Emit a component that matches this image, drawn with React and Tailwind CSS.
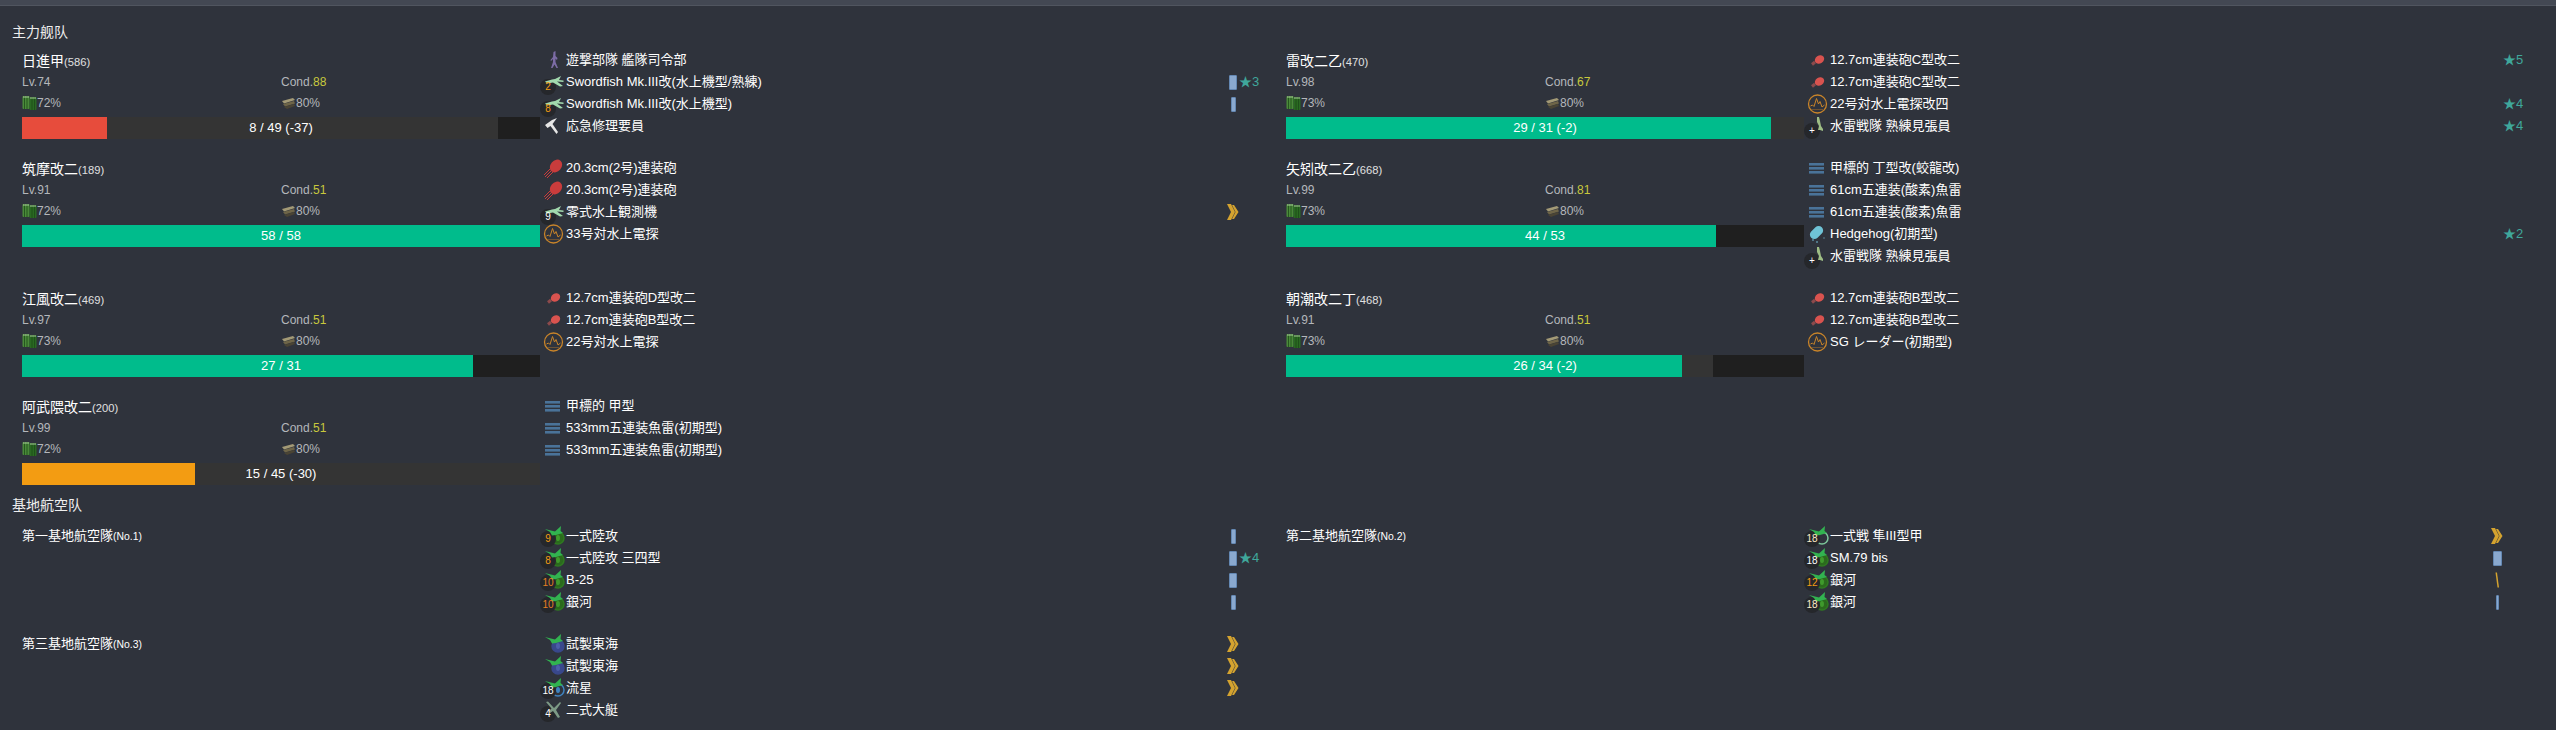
import React from 'react';

const ships = [
  [
    { name: '日進甲', id: 586, lv: 74, cond: 88, fuel: 72, ammo: 80, hp: 8, max: 49, loss: 37, color: 'bg-[#e74c3c]', equips: [
      { icon: 'person', name: '遊撃部隊 艦隊司令部' },
      { icon: 'seaplane', name: 'Swordfish Mk.III改(水上機型/熟練)', num: '2', numColor: 'text-[#f39c12]', alias: 'bar2', star: 3 },
      { icon: 'seaplane', name: 'Swordfish Mk.III改(水上機型)', num: '8', numColor: 'text-[#f39c12]', alias: 'bar1' },
      { icon: 'repair', name: '応急修理要員' },
    ] },
    { name: '雷改二乙', id: 470, lv: 98, cond: 67, fuel: 73, ammo: 80, hp: 29, max: 31, loss: 2, color: 'bg-[#00bc8c]', equips: [
      { icon: 'gunS', name: '12.7cm連装砲C型改二', star: 5 },
      { icon: 'gunS', name: '12.7cm連装砲C型改二' },
      { icon: 'radar', name: '22号対水上電探改四', star: 4 },
      { icon: 'lookout', name: '水雷戦隊 熟練見張員', num: '+', numColor: 'text-white', star: 4 },
    ] },
  ],
  [
    { name: '筑摩改二', id: 189, lv: 91, cond: 51, fuel: 72, ammo: 80, hp: 58, max: 58, loss: 0, color: 'bg-[#00bc8c]', equips: [
      { icon: 'gunL', name: '20.3cm(2号)連装砲' },
      { icon: 'gunL', name: '20.3cm(2号)連装砲' },
      { icon: 'seaplane', name: '零式水上観測機', num: '9', numColor: 'text-white', alias: 'chevron' },
      { icon: 'radar', name: '33号対水上電探' },
    ] },
    { name: '矢矧改二乙', id: 668, lv: 99, cond: 81, fuel: 73, ammo: 80, hp: 44, max: 53, loss: 0, color: 'bg-[#00bc8c]', equips: [
      { icon: 'torpedo', name: '甲標的 丁型改(蛟龍改)' },
      { icon: 'torpedo', name: '61cm五連装(酸素)魚雷' },
      { icon: 'torpedo', name: '61cm五連装(酸素)魚雷' },
      { icon: 'hedgehog', name: 'Hedgehog(初期型)', star: 2 },
      { icon: 'lookout', name: '水雷戦隊 熟練見張員', num: '+', numColor: 'text-white' },
    ] },
  ],
  [
    { name: '江風改二', id: 469, lv: 97, cond: 51, fuel: 73, ammo: 80, hp: 27, max: 31, loss: 0, color: 'bg-[#00bc8c]', equips: [
      { icon: 'gunS', name: '12.7cm連装砲D型改二' },
      { icon: 'gunS', name: '12.7cm連装砲B型改二' },
      { icon: 'radar', name: '22号対水上電探' },
    ] },
    { name: '朝潮改二丁', id: 468, lv: 91, cond: 51, fuel: 73, ammo: 80, hp: 26, max: 34, loss: 2, color: 'bg-[#00bc8c]', equips: [
      { icon: 'gunS', name: '12.7cm連装砲B型改二' },
      { icon: 'gunS', name: '12.7cm連装砲B型改二' },
      { icon: 'radar', name: 'SG レーダー(初期型)' },
    ] },
  ],
  [
    { name: '阿武隈改二', id: 200, lv: 99, cond: 51, fuel: 72, ammo: 80, hp: 15, max: 45, loss: 30, color: 'bg-[#f39c12]', equips: [
      { icon: 'torpedo', name: '甲標的 甲型' },
      { icon: 'torpedo', name: '533mm五連装魚雷(初期型)' },
      { icon: 'torpedo', name: '533mm五連装魚雷(初期型)' },
    ] },
  ],
];

const orange = 'text-[#f39c12]';
const cream = 'text-[#fdebc8]';

const bases = [
  [
    { name: '第一基地航空隊', no: 1, equips: [
      { icon: 'landGreen', name: '一式陸攻', num: '9', numColor: orange, alias: 'bar1' },
      { icon: 'landGreen', name: '一式陸攻 三四型', num: '8', numColor: orange, alias: 'bar2', star: 4 },
      { icon: 'landGreen', name: 'B-25', num: '10', numColor: 'text-[#e67e22]', alias: 'bar2' },
      { icon: 'landGreen', name: '銀河', num: '10', numColor: 'text-[#e67e22]', alias: 'bar1' },
    ] },
    { name: '第二基地航空隊', no: 2, equips: [
      { icon: 'landFighter', name: '一式戦 隼III型甲', num: '18', numColor: cream, alias: 'chevron' },
      { icon: 'landGreen', name: 'SM.79 bis', num: '18', numColor: 'text-white', alias: 'bar3' },
      { icon: 'landGreen', name: '銀河', num: '12', numColor: orange, alias: 'slash' },
      { icon: 'landGreen', name: '銀河', num: '18', numColor: cream, alias: 'thin' },
    ] },
  ],
  [
    { name: '第三基地航空隊', no: 3, equips: [
      { icon: 'landNavy', name: '試製東海', alias: 'chevron' },
      { icon: 'landNavy', name: '試製東海', alias: 'chevron' },
      { icon: 'landBlue', name: '流星', num: '18', numColor: 'text-white', alias: 'chevron' },
      { icon: 'flyingBoat', name: '二式大艇', num: '4', numColor: 'text-white' },
    ] },
  ],
];

const landCircles = {
  landGreen: { circle: '#2b6a1d', inner: '#3f9a2c', outline: '#2f7a20' },
  landFighter: { circle: '#2f333c', inner: '#2f333c', outline: '#7cc59a' },
  landNavy: { circle: '#39488c', inner: '#4c5ea8', outline: '#39488c' },
  landBlue: { circle: '#2f333c', inner: '#3f83c0', outline: '#3f83c0' },
};

function EquipIcon({ type }) {
  let art = null;
  if (landCircles[type]) {
    const c = landCircles[type];
    art = (
      <>
        <circle cx="18" cy="13" r="6" fill={c.circle} stroke={c.outline} strokeWidth="1.5" />
        <ellipse cx="18" cy="13" rx="2" ry="3" fill={c.inner} />
      </>
    );
  }
  if (type === 'person') {
    art = <path d="M13.5 3 L15.5 2 L15.5 7 L17.5 9 L17 11 L15.5 9.5 L15.5 13 L18 19 L16.5 19 L14.5 15.5 L12.5 19 L11 19 L13 13 L13 10 L11 12 L10.5 11 L13 8 Z" fill="#7c6ca5" />;
  }
  if (type === 'repair') {
    art = <path d="M5 10 L12 5 L17 3 L12.5 9 L18 17 L16.5 19 L10.5 11 L7.5 13 Z" fill="#e6e6e6" />;
  }
  if (type === 'gunL') {
    art = (
      <>
        <ellipse cx="16" cy="9" rx="5.5" ry="7" transform="rotate(40 16 9)" fill="#c93c3c" />
        <path d="M12 13 L5 20 M13.5 14.5 L7 21 M10.5 11.5 L4 18" stroke="#c93c3c" strokeWidth="1" />
      </>
    );
  }
  if (type === 'gunS') {
    art = (
      <>
        <ellipse cx="15.5" cy="10.5" rx="5" ry="4" transform="rotate(-35 15.5 10.5)" fill="#d9534f" />
        <path d="M11 13 L8 15.5" stroke="#8c4a4c" strokeWidth="3" />
      </>
    );
  }
  if (type === 'radar') {
    art = (
      <>
        <circle cx="13.5" cy="11" r="9" fill="none" stroke="#c98429" strokeWidth="1.3" />
        <path d="M6.5 13 L8.5 12 L10 13.5 L12.5 5.5 L14.5 11 L16 8.5 L18 14 L20.5 12" fill="none" stroke="#c98429" strokeWidth="1" />
        <path d="M7.5 16.5 L19.5 16.5" stroke="#c98429" strokeWidth="0.8" strokeDasharray="1 1" />
      </>
    );
  }
  if (type === 'torpedo') {
    art = (
      <>
        <rect x="5" y="6" width="15" height="2.6" fill="#4a7399" />
        <rect x="5" y="10" width="15" height="2.6" fill="#4a7399" />
        <rect x="5" y="14" width="15" height="2.6" fill="#4a7399" />
      </>
    );
  }
  if (type === 'hedgehog') {
    art = (
      <>
        <rect x="5" y="5" width="15" height="9" rx="4.5" transform="rotate(-45 12.5 9.5)" fill="#6fc3d6" />
        <circle cx="9" cy="17" r="1" fill="#5b8ea0" />
        <circle cx="13" cy="19" r="1" fill="#5b8ea0" />
        <circle cx="20" cy="15" r="0.8" fill="#5b8ea0" />
      </>
    );
  }
  return (
    <svg width="26" height="22" viewBox="0 0 26 22" className="block shrink-0">
      {art}
    </svg>
  );
}

// drawn over the dark number disc
function PlaneOverlay({ type }) {
  let art = null;
  if (landCircles[type]) {
    art = <path d="M5 4 L11 5.5 L15 6.5 L21 1 L20.5 6 L23 8 L16 10 L12 10.5 L10 7 Z" fill="#32b350" />;
  }
  if (type === 'seaplane') {
    art = <path d="M5 10.5 L12 8.5 L15 8 L21 5 L19 9 L23.5 9.5 L23.5 11 L17 10.5 L23 15 L20 15.5 L13 11.5 L7 12.5 Z" fill="#a2d9ae" />;
  }
  if (type === 'flyingBoat') {
    art = <path d="M6 3 L8 2.5 L14 9 L20 3 L21 4 L16 11 L20 18 L18 19 L13 12 L10 14 L9 12 L11.5 9.5 Z" fill="#7d9a86" />;
  }
  if (type === 'lookout') {
    art = <path d="M13 2 L15 2 L16 6 L17 11 L19 14 L19 16 L16 15 L14 15 L15 11 L13 7 Z" fill="#9ebd84" />;
  }
  if (!art) return null;
  return (
    <svg width="26" height="22" viewBox="0 0 26 22" className="absolute left-0 top-0 block">
      {art}
    </svg>
  );
}

function Alias({ type }) {
  if (type === 'chevron') {
    return (
      <svg width="12" height="16" viewBox="0 0 12 16" className="block">
        <path d="M0 0 H4 L8 8 L4 16 H0 L4 8 Z M5 1 H7 L11.5 8 L7 15 H5 L8.5 8 Z" fill="#d4a32f" />
      </svg>
    );
  }
  if (type === 'slash') {
    return (
      <svg width="12" height="16" viewBox="0 0 12 16" className="block">
        <path d="M4.5 0.5 L6 0.5 L8 15.5 L6.5 15.5 Z" fill="#d4a32f" />
      </svg>
    );
  }
  const widths = { thin: 'w-[3px]', bar1: 'w-[5px]', bar2: 'w-[8px]', bar3: 'w-[9px]' };
  return <div className={`h-[15px] rounded-[1px] bg-[#8aa9cf] border border-[#6488b3] ${widths[type]}`} />;
}

function EquipRow({ equip }) {
  const isLand = equip.icon.startsWith('land');
  const top = isLand ? 'top-[6px]' : equip.icon === 'flyingBoat' ? 'top-[7px]' : 'top-[8px]';
  return (
    <div className="flex items-center h-[22px] pr-[8px]">
      <div className="relative w-[26px] h-[22px] shrink-0">
        <EquipIcon type={equip.icon} />
        {equip.num && <div className={`absolute left-0 w-[16px] h-[16px] rounded-full bg-[#25272b] ${top}`} />}
        <PlaneOverlay type={equip.icon} />
        {equip.num && (
          <span className={`absolute left-0 w-[16px] text-center text-[10px] leading-[16px] ${top} ${equip.numColor}`}>
            {equip.num}
          </span>
        )}
      </div>
      <span className="flex-1 min-w-0 whitespace-nowrap text-[13px] text-white">{equip.name}</span>
      <div className="w-[12px] flex justify-center shrink-0">
        {equip.alias && <Alias type={equip.alias} />}
      </div>
      <span className="w-[18px] shrink-0 whitespace-nowrap text-[13px] text-[#3fa79b]">
        {equip.star ? `★${equip.star}` : ''}
      </span>
    </div>
  );
}

function FuelIcon() {
  return (
    <svg width="15" height="14" viewBox="0 0 15 14" className="block shrink-0">
      <rect x="0.5" y="0" width="7" height="13" rx="1" fill="#4a8a3a" />
      <rect x="7.5" y="1" width="7" height="13" rx="1" fill="#2a6a22" />
      <path d="M2.5 0 V13 M5 0 V13 M10 1 V14 M12.5 1 V14" stroke="#1d4a18" strokeWidth="0.8" />
      <path d="M1 1 H7 M8 2 H14" stroke="#a8c99a" strokeWidth="1" />
    </svg>
  );
}

function AmmoIcon() {
  return (
    <svg width="15" height="14" viewBox="0 0 15 14" className="block shrink-0">
      <path d="M1 5 L12 2 L14 4 L3 7.5 Z" fill="#a39a76" />
      <path d="M2 8 L13 5 L14 7.5 L4 10.5 Z" fill="#6e6548" />
      <path d="M3 11 L13 8 L14 10 L6 13 Z" fill="#4a4434" />
    </svg>
  );
}

function Ship({ ship }) {
  const now = (ship.hp / ship.max) * 100;
  const after = ((ship.hp + ship.loss) / ship.max) * 100;
  return (
    <div className="flex mb-[20px]">
      <div className="w-[518px] shrink-0 -mb-[2px]">
        <div className="h-[24px] leading-[24px] text-[14px] text-white whitespace-nowrap">
          {ship.name}
          <span className="text-[11.2px] text-[#e0e0e0]">({ship.id})</span>
        </div>
        <div className="grid grid-cols-2 h-[16px] items-center text-[12px] text-[#b4b7bb]">
          <span>Lv.{ship.lv}</span>
          <span>Cond.<span className="text-[#c8c83c]">{ship.cond}</span></span>
        </div>
        <div className="grid grid-cols-2 h-[28px] items-center text-[12px] text-[#b4b7bb]">
          <span className="flex items-center"><FuelIcon />{ship.fuel}%</span>
          <span className="flex items-center"><AmmoIcon />{ship.ammo}%</span>
        </div>
        <div className="relative h-[22px] bg-[#1f1f1f] overflow-hidden">
          <div className="absolute left-0 top-0 h-full bg-[#343434]" style={{ width: `${after}%` }} />
          <div className={`absolute left-0 top-0 h-full ${ship.color}`} style={{ width: `${now}%` }} />
          <div className="relative text-center text-[13px] leading-[22px] text-white">
            {ship.hp} / {ship.max}{ship.loss ? ` (-${ship.loss})` : ''}
          </div>
        </div>
      </div>
      <div className="flex-1 min-w-0">
        {ship.equips.map((e, i) => <EquipRow key={i} equip={e} />)}
      </div>
    </div>
  );
}

function Base({ base }) {
  return (
    <div className="flex mb-[20px]">
      <div className="w-[518px] shrink-0 h-[22px] leading-[22px] text-[13px] text-white whitespace-nowrap">
        {base.name}
        <span className="text-[10.4px]">(No.{base.no})</span>
      </div>
      <div className="flex-1 min-w-0">
        {base.equips.map((e, i) => <EquipRow key={i} equip={e} />)}
      </div>
    </div>
  );
}

export default function App() {
  return (
    <div className="h-[730px] overflow-hidden bg-[#2f333c] font-['Liberation_Sans','Noto_Sans_CJK_JP',sans-serif]">
      {/* Top strip */}
      <div className="h-[6px] bg-[#434853] border-b border-[#50555f]" />

      {/* Main fleet */}
      <h2 className="mt-[12px] mb-[3px] pl-[12px] h-[28px] leading-[28px] text-[14px] font-normal text-[#eeeeee]">主力舰队</h2>
      <div className="pl-[12px]">
        {ships.map((row, i) => (
          <div key={i} className="grid grid-cols-[1264px_1263px]">
            {row.map((ship, j) => (
              <div key={ship.id} className={j === 0 ? 'pl-[10px] pr-[11px]' : 'px-[10px]'}>
                <Ship ship={ship} />
              </div>
            ))}
          </div>
        ))}
      </div>

      {/* Land base */}
      <h2 className="-mt-[12px] mb-[6px] pl-[12px] h-[28px] leading-[28px] text-[14px] font-normal text-[#eeeeee]">基地航空队</h2>
      <div className="pl-[12px]">
        {bases.map((row, i) => (
          <div key={i} className="grid grid-cols-[1264px_1263px]">
            {row.map((base, j) => (
              <div key={base.no} className={j === 0 ? 'pl-[10px] pr-[11px]' : 'px-[10px]'}>
                <Base base={base} />
              </div>
            ))}
          </div>
        ))}
      </div>
    </div>
  );
}
